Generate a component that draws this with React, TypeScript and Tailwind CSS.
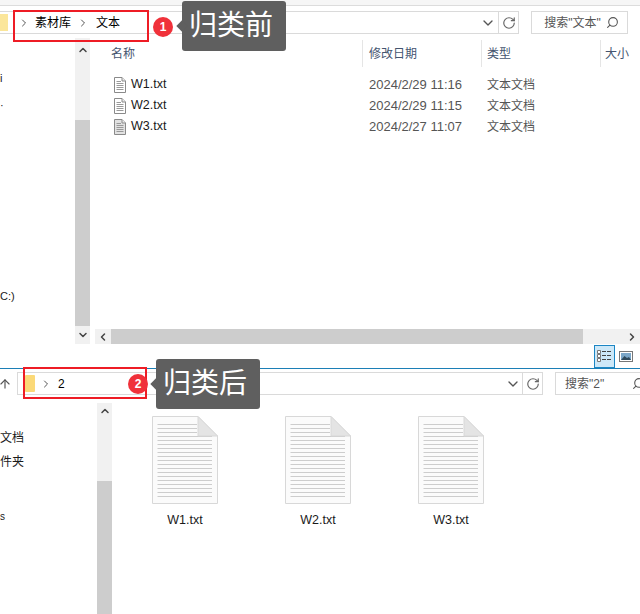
import { ChevronDown, ChevronLeft, ChevronRight, ChevronUp, RotateCw, Search, ArrowUp } from 'lucide-react';

const font = "font-['Liberation_Sans','Noto_Sans_CJK_SC',sans-serif]";

const rows = [
  { name: 'W1.txt', date: '2024/2/29 11:16' },
  { name: 'W2.txt', date: '2024/2/29 11:15' },
  { name: 'W3.txt', date: '2024/2/27 11:07' },
];

function SmallDoc({ shaded }: { shaded?: boolean }) {
  return (
    <svg width="12" height="16" viewBox="0 0 12 16" className="shrink-0">
      <path d="M0.5 0.5H8L11.5 4V15.5H0.5Z" fill={shaded ? '#e2e2e2' : '#fff'} stroke="#8a8a8a" />
      <path d="M8 0.5V4H11.5" fill="#ececec" stroke="#8a8a8a" />
      <path d="M2.5 4.5H7M2.5 6.5H9.5M2.5 8.5H9.5M2.5 10.5H9.5M2.5 12.5H9.5" stroke="#999" />
    </svg>
  );
}

function BigDoc() {
  const lines = [9, 13, 17, 21, 25, 29, 33, 37, 41, 45, 49, 53, 57, 61, 65, 69, 73, 77, 81];
  return (
    <svg width="68" height="91" viewBox="0 0 68 91">
      <path d="M1.5 1.5H47L66.5 21V88.5H1.5Z" fill="#fbfbfb" stroke="#d8d8d8" />
      {lines.map((y) => (
        <path key={y} d={`M6.5 ${y + 0.5}H${y < 20 ? 46 : 61}`} stroke="#cdcdcd" />
      ))}
      <path d="M47 1.5V21H66.5Z" fill="#e4e4e4" stroke="#d8d8d8" />
    </svg>
  );
}

function DetailsGlyph() {
  return (
    <svg width="15" height="13" viewBox="0 0 15 13">
      <path d="M0.5 0.5H3.5V3.5H0.5ZM0.5 4.5H3.5V7.5H0.5ZM0.5 8.5H3.5V11.5H0.5Z" fill="#fff" stroke="#777" />
      <path d="M5 1.5H15M5 5.5H15M5 9.5H15" stroke="#444" strokeDasharray="4 1" />
    </svg>
  );
}

function PictureGlyph() {
  return (
    <svg width="14" height="11" viewBox="0 0 14 11">
      <rect x="0.5" y="0.5" width="13" height="10" fill="#fff" stroke="#777" />
      <rect x="2" y="2" width="10" height="7" fill="#7ba7c9" />
      <path d="M2 9L5.5 5L8 7L10 6L12 9Z" fill="#2f4a5c" />
    </svg>
  );
}

function Callout({ text, className }: { text: string; className: string }) {
  return (
    <div className={`absolute flex items-center justify-center rounded-[3px] bg-[#5f5f5f] pr-[6px] text-[28px] leading-none text-white ${className}`}>
      <span className="absolute left-[-4px] top-[21px] h-2 w-2 rotate-45 bg-[#5f5f5f]" />
      {text}
    </div>
  );
}

function Badge({ n, className }: { n: number; className: string }) {
  return (
    <div className={`absolute flex h-5 w-5 items-center justify-center rounded-full bg-[#f0313a] text-xs font-bold text-white ${className}`}>
      {n}
    </div>
  );
}

export default function App() {
  return (
    <div className={`relative h-[614px] w-[640px] overflow-hidden bg-white text-xs text-[#1a1a1a] ${font}`}>
      {/* Top window */}
      <div className="flex h-[369px] flex-col border-b border-[#1c7fb6]">
        <div className="h-[6px] shrink-0 border-b border-[#dcdcdc] bg-[#f6f6f6]" />
        <div className="mt-[5px] flex h-[23px] shrink-0 items-center pr-3">
          <div className="flex h-full w-[520px] items-center border border-l-0 border-[#dadada]">
            <div className="h-[17px] w-2 bg-[#fbe69a]" />
            <ChevronRight className="ml-[10px] h-3 w-3 text-[#555]" />
            <span className="ml-[5px] text-black">素材库</span>
            <ChevronRight className="ml-[6px] h-3 w-3 text-[#555]" />
            <span className="ml-[7px] text-black">文本</span>
            <ChevronDown className="ml-auto mr-[2px] h-4 w-4 text-[#555]" />
            <div className="flex h-full w-5 items-center justify-center border-l border-[#dadada]">
              <RotateCw className="h-[14px] w-[14px] text-[#666]" />
            </div>
          </div>
          <div className="ml-3 flex h-full w-[97px] items-center border border-[#dadada] pl-3 pr-2 text-[#555]">
            <span>搜索"文本"</span>
            <Search className="ml-auto h-[13px] w-[13px] -scale-x-100 text-[#555]" />
          </div>
        </div>

        <div className="mt-1 flex min-h-0 flex-1">
          {/* Nav pane */}
          <div className="flex w-[75px] shrink-0 flex-col text-[11px]">
            <span className="mt-[33px]">i</span>
            <span className="mt-[12px]">·</span>
            <span className="mt-[177px]">C:)</span>
          </div>
          {/* Vertical scrollbar */}
          <div className="mb-[24px] flex w-[15px] shrink-0 flex-col items-center bg-[#f1f1f1]">
            <ChevronUp className="mt-[6px] h-3 w-3 text-[#444]" strokeWidth={3} />
            <div className="mt-[64px] w-full flex-1 bg-[#cdcdcd]" />
            <ChevronDown className="mb-[3px] mt-[3px] h-3 w-3 text-[#444]" strokeWidth={3} />
          </div>

          {/* File list */}
          <div className="ml-[5px] flex min-w-0 flex-1 flex-col">
            <div className="flex h-[30px] shrink-0 pt-[2px] text-[#44546f]">
              <div className="w-[267px] pl-[16px] pt-[6px]">名称</div>
              <div className="h-[27px] w-[119px] border-l border-[#e5e5e5] pl-[6px] pt-[6px]">修改日期</div>
              <div className="h-[27px] w-[119px] border-l border-[#e5e5e5] pl-[5px] pt-[6px]">类型</div>
              <div className="h-[27px] flex-1 border-l border-[#e5e5e5] pl-[4px] pt-[6px]">大小</div>
            </div>
            <div className="mt-[6px] flex flex-1 flex-col">
              {rows.map((r, i) => (
                <div key={r.name} className="flex h-[21px] items-center">
                  <div className="flex w-[274px] items-center gap-[5px] pl-[19px]">
                    <SmallDoc shaded={i === 2} />
                    <span className="text-[12.5px]">{r.name}</span>
                  </div>
                  <div className="w-[118px] text-[13px] text-[#555]">{r.date}</div>
                  <div className="text-[#555]">文本文档</div>
                </div>
              ))}
            </div>
            {/* Horizontal scrollbar */}
            <div className="flex h-[15px] shrink-0 items-center bg-[#f1f1f1]">
              <ChevronLeft className="ml-[2px] h-3 w-3 shrink-0 text-[#444]" strokeWidth={3} />
              <div className="ml-[2px] h-full w-[472px] bg-[#cdcdcd]" />
              <ChevronRight className="ml-auto mr-[2px] h-3 w-3 shrink-0 text-[#444]" strokeWidth={3} />
            </div>
            <div className="flex h-[24px] shrink-0 items-center justify-end">
              <div className="flex h-[23px] w-[21px] items-center justify-center border border-[#1c86c4] bg-[#cde8f8]">
                <DetailsGlyph />
              </div>
              <div className="ml-[4px] mr-[7px] flex">
                <PictureGlyph />
              </div>
            </div>
          </div>
        </div>
      </div>

      {/* Bottom window */}
      <div className="flex items-center pt-[3px]">
        <ArrowUp className="ml-[-2px] h-[14px] w-[14px] text-[#555]" />
        <div className="ml-[5px] flex h-[23px] w-[526px] items-center border border-[#dadada]">
          <div className="ml-[7px] h-[17px] w-[10px] rounded-[1px] bg-[#fbd978]" />
          <ChevronRight className="ml-[5px] h-3 w-3 text-[#555]" />
          <span className="ml-[6px] text-black">2</span>
          <ChevronDown className="ml-auto mr-[1px] h-4 w-4 text-[#555]" />
          <div className="flex h-full w-5 items-center justify-center border-l border-[#dadada]">
            <RotateCw className="h-[14px] w-[14px] text-[#666]" />
          </div>
        </div>
        <div className="ml-[12px] flex h-[23px] flex-1 items-center border-y border-l border-[#dadada] pl-[9px] text-[#555]">
          <span>搜索"2"</span>
          <Search className="ml-auto mr-[-5px] h-[13px] w-[13px] -scale-x-100 text-[#555]" />
        </div>
      </div>

      <div className="mt-[8px] flex h-[211px]">
        <div className="flex w-[97px] shrink-0 flex-col">
          <span className="mt-[27px]">文档</span>
          <span className="mt-[8px]">件夹</span>
          <span className="mt-[40px] text-[10px]">s</span>
        </div>
        <div className="flex w-[15px] shrink-0 flex-col items-center bg-[#f1f1f1]">
          <ChevronUp className="mt-[2px] h-3 w-3 text-[#444]" strokeWidth={3} />
          <div className="mt-[64px] w-full flex-1 bg-[#cdcdcd]" />
        </div>
        <div className="ml-[39px] flex gap-[65px] pt-[12px]">
          {rows.map((r) => (
            <div key={r.name} className="flex w-[68px] flex-col items-center">
              <BigDoc />
              <span className="mt-[6px] text-[12.5px]">{r.name}</span>
            </div>
          ))}
        </div>
      </div>

      {/* Annotations */}
      <div className="absolute left-[13px] top-[10px] h-[32px] w-[136px] border-[2px] border-[#ee1c25]" />
      <Badge n={1} className="left-[153px] top-[17px]" />
      <Callout text="归类前" className="left-[182px] top-[1px] h-[50px] w-[104px]" />
      <div className="absolute left-[23px] top-[367px] h-[32px] w-[124px] border-[2px] border-[#ee1c25]" />
      <Badge n={2} className="left-[128px] top-[374px]" />
      <Callout text="归类后" className="left-[156px] top-[359px] h-[50px] w-[104px]" />
    </div>
  );
}
